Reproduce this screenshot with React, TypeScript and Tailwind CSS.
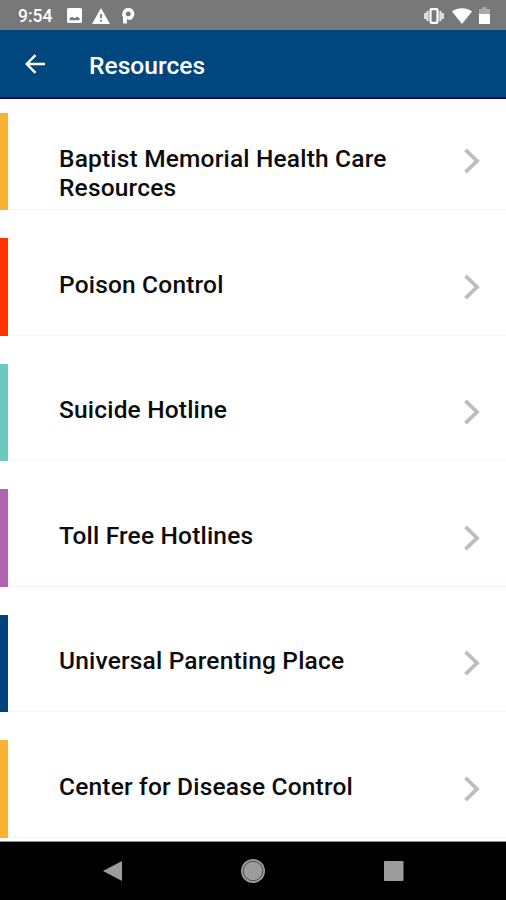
import clsx from "clsx";

const resources = [
  { name: "Baptist Memorial Health Care Resources", color: "bg-[#f9b233]" },
  { name: "Poison Control", color: "bg-[#ff3300]" },
  { name: "Suicide Hotline", color: "bg-[#6cc9bf]" },
  { name: "Toll Free Hotlines", color: "bg-[#b066ae]" },
  { name: "Universal Parenting Place", color: "bg-[#00407d]" },
  { name: "Center for Disease Control", color: "bg-[#f9b233]" },
];

const StatusBar = () => (
  <div className="flex h-[30px] shrink-0 items-center justify-between bg-[#787878] pt-[1px] pr-[16px] pl-[18px] text-white">
    <div className="flex items-center">
      <span className="w-[49px] pt-[2px] text-[17.5px] leading-none font-medium">9:54</span>
      {/* Image */}
      <svg className="h-[15px] w-[15px]" viewBox="0 0 15 15" fill="currentColor">
        <path
          fillRule="evenodd"
          d="M1.5 0h12A1.5 1.5 0 0 1 15 1.5v12a1.5 1.5 0 0 1-1.5 1.5h-12A1.5 1.5 0 0 1 0 13.5v-12A1.5 1.5 0 0 1 1.5 0zM2.5 12.2h10V10L10 8.8 7.5 10.2 5 8.8 2.5 10.4z"
        />
      </svg>
      {/* Warning */}
      <svg className="ml-[10px] h-[16px] w-[18px]" viewBox="0 0 18 16" fill="currentColor">
        <path fillRule="evenodd" d="M9 0l9 16H0zM8.1 6v4.3h1.8V6zM8.1 11.8v1.9h1.8v-1.9z" />
      </svg>
      {/* Parking */}
      <svg className="ml-[12px] h-[16px] w-[13px]" viewBox="0 0 13 16" fill="none" stroke="currentColor">
        <path d="M3 15.500V7.500" strokeWidth="4" />
        <path d="M2 8.500V6a4.300 4.300 0 1 1 4.500 4.300" strokeWidth="3.600" />
        <path d="M5 9.800h2" strokeWidth="3" />
      </svg>
    </div>
    <div className="flex items-center">
      {/* Vibrate */}
      <svg className="h-[16px] w-[20px]" viewBox="0 0 20 16" fill="none">
        <path d="M3.5 3v10M16.5 3v10M1.2 5v6M18.8 5v6" stroke="#dedede" strokeWidth="2.3" />
        <rect x="6.5" y="1.2" width="7" height="13.6" rx="1" stroke="currentColor" strokeWidth="2.2" />
      </svg>
      {/* Wifi */}
      <svg className="ml-[8px] h-[16px] w-[20px]" viewBox="0 0 20 16" fill="currentColor">
        <path d="M0 3.5C5.5-.8 14.5-.8 20 3.5L10 16z" />
      </svg>
      {/* Battery */}
      <svg className="ml-[7px] h-[17px] w-[11px]" viewBox="0 0 11 17" fill="currentColor">
        <path d="M3.5 0h4v2H11v5H0V2h3.5z" fill="#a9a9a9" />
        <path d="M0 7h11v10H0z" />
      </svg>
    </div>
  </div>
);

const Header = () => (
  <header className="flex h-[69px] shrink-0 items-center border-b-2 border-[#00086b] bg-[#00467f] pl-[25px] text-white">
    <svg className="h-[20px] w-[20px]" viewBox="0 0 20 20" fill="none" stroke="currentColor" strokeWidth="2.4">
      <path d="M20 10H2M10.5 1.2L1.7 10l8.8 8.8" />
    </svg>
    <h1 className="ml-[44px] pt-[4px] text-[24.6px] leading-7 font-medium">Resources</h1>
  </header>
);

const ResourceRow = ({ name, color }: { name: string; color: string }) => (
  <li className="flex h-[97.7px] shrink-0">
    <div className={clsx("w-2 shrink-0", color)} />
    <div className="flex min-w-0 flex-1 justify-between border-b border-[#fbf1f2] pr-[26px] pl-[51px]">
      <span className="w-[350px] pt-[31.5px] text-[24.5px] leading-[29px] font-medium tracking-[0.18px] text-[#0c0c0c]">
        {name}
      </span>
      <svg className="mt-[35.5px] h-[26px] w-[16px]" viewBox="0 0 16 26" fill="none" stroke="#bdbdbd" strokeWidth="3.8">
        <path d="M1.5 1.8L13 13 1.5 24.2" />
      </svg>
    </div>
  </li>
);

const NavigationBar = () => (
  <nav className="flex h-[59px] shrink-0 items-center justify-between border-t border-[#909090] bg-black pr-[102px] pl-[102px] text-[#9c9c9c]">
    <svg className="h-[22px] w-[20px]" viewBox="0 0 20 22" fill="currentColor">
      <path d="M20 1v20L1 11z" />
    </svg>
    <svg className="h-[24px] w-[24px]" viewBox="0 0 24 24" fill="currentColor">
      <circle cx="12" cy="12" r="12" />
      <circle cx="12" cy="12" r="9.8" fill="none" stroke="#444" strokeWidth="0.9" />
    </svg>
    <svg className="h-[20px] w-[20px]" viewBox="0 0 20 20" fill="currentColor">
      <rect width="19.5" height="20" rx="1" />
    </svg>
  </nav>
);

const App = () => {
  return (
    <div className="flex h-[900px] w-[506px] flex-col overflow-hidden bg-white font-['Roboto',sans-serif]">
      <StatusBar />
      <Header />
      <ul className="flex min-h-0 flex-1 flex-col gap-[27.8px] overflow-hidden pt-[13.8px]">
        {resources.map((resource, index) => (
          <ResourceRow key={index} name={resource.name} color={resource.color} />
        ))}
      </ul>
      <NavigationBar />
    </div>
  );
};

export default App;
